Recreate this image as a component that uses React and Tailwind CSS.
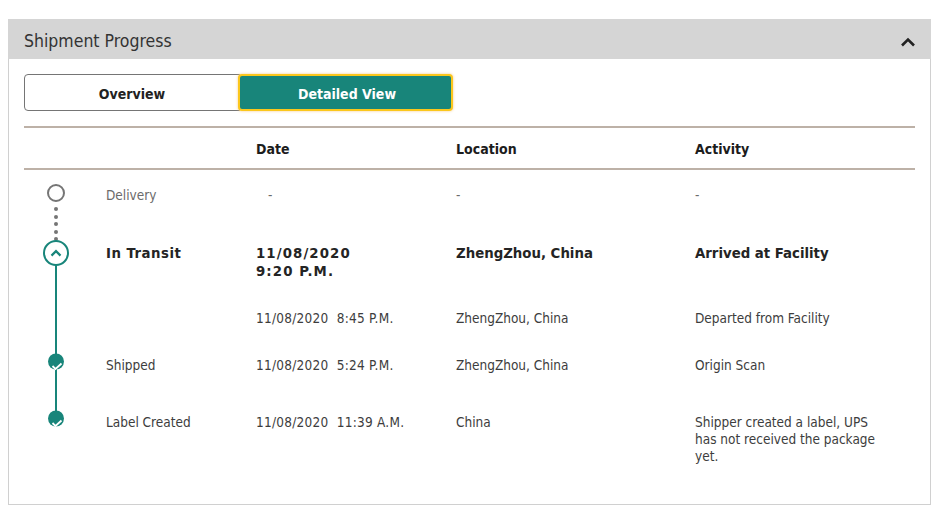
import { useState } from 'react'

const FONT = "font-['DejaVu_Sans_Condensed','DejaVu_Sans',sans-serif]"
const TEAL = '#18857a'
const COLS = 'grid grid-cols-[82px_150px_200px_239px_1fr]'

function Chevron({ className, stroke = 2.6 }) {
  return (
    <svg className={className} viewBox="0 0 16 10" fill="none">
      <path d="M2 8.5 L8 2.5 L14 8.5" stroke="currentColor" strokeWidth={stroke} />
    </svg>
  )
}

// filled node with the little white tick on its lower edge
function DoneNode() {
  return (
    <svg className="absolute left-[23px] top-[-4px] w-[18px] h-[18px]" viewBox="0 0 18 18">
      <circle cx="9" cy="8.5" r="8" fill={TEAL} />
      <path d="M5.5 13 L8.5 16 L14.5 10.5" fill="none" stroke="#fff" strokeWidth="1.8" />
    </svg>
  )
}

function Row({ marker, status, date, location, activity, bold, muted, className }) {
  let text = 'text-[13.5px] leading-[17px] text-[#3d3d3d]'
  if (bold) text = 'text-[14.8px] leading-[18px] font-bold text-[#242424]'
  if (muted) text = 'text-[13.5px] leading-[17px] text-[#6b6b6b]'
  return (
    <div className={`${COLS} ${className}`}>
      <div className="relative">{marker}</div>
      <div className={`${text} ${bold ? 'tracking-[0.5px]' : ''}`}>{status}</div>
      <div className={`${text} ${muted ? 'pl-3' : bold ? 'tracking-[1.1px]' : 'tracking-[0.25px]'}`}>{date}</div>
      <div className={text}>{location}</div>
      <div className={`${text} max-w-[190px]`}>{activity}</div>
    </div>
  )
}

export default function App() {
  const [open] = useState(true)

  return (
    <div className={`${FONT} bg-white w-[931px] h-[505px] pt-[19px] pl-2`}>
      <div className="w-[923px] h-[486px] border-x border-b border-[#d0d0d0]">
        <div className="h-10 -mx-px bg-[#d5d5d5] flex items-center justify-between pl-4 pr-[15px]">
          <h2 className="text-[17.5px] text-[#333] pt-[5px]">Shipment Progress</h2>
          <Chevron className="w-4 h-[10px] mt-[6px] text-[#222]" />
        </div>

        {open && (
          <div className="px-[15px]">
            <div className="flex pt-[15px]">
              <button className="w-[216px] h-[37px] pt-[3px] border border-[#757575] rounded-l-[4px] text-[14px] font-bold text-[#222]">
                Overview
              </button>
              <button className="relative -ml-[2px] w-[215px] h-[37px] pt-[3px] pl-[3px] bg-[#18857a] border-2 border-[#fbc71c] rounded-[4px] text-[14px] font-bold text-white shadow-[0_0_3px_#f5c98a]">
                Detailed View
              </button>
            </div>

            <div className={`${COLS} mt-[15px] w-[891px] pt-[2px] border-y-2 border-[#bdb1a7] h-[44px] items-center text-[14px] font-bold text-[#1c1c1c]`}>
              <div className="col-start-3">Date</div>
              <div>Location</div>
              <div>Activity</div>
            </div>

            <Row
              muted
              className="pt-[17px] pb-[40px]"
              status="Delivery"
              date="-"
              location="-"
              activity="-"
              marker={
                <>
                  <div className="absolute left-[23px] top-[-3px] w-[18px] h-[18px] rounded-full border-2 border-[#757575]" />
                  <div className="absolute left-[30px] top-[20px] flex flex-col gap-[3.5px]">
                    <span className="w-1 h-1 rounded-full bg-[#757575]" />
                    <span className="w-1 h-1 rounded-full bg-[#757575]" />
                    <span className="w-1 h-1 rounded-full bg-[#757575]" />
                    <span className="w-1 h-1 rounded-full bg-[#757575]" />
                    <span className="w-1 h-1 rounded-full bg-[#757575]" />
                  </div>
                </>
              }
            />
            <Row
              bold
              className="pb-[30px]"
              status="In Transit"
              date={<>11/08/2020<br />9:20 P.M.</>}
              location="ZhengZhou, China"
              activity="Arrived at Facility"
              marker={
                <>
                  <div className="absolute left-[19px] top-[-4px] w-[26px] h-[26px] rounded-full border-2 border-[#18857a] bg-white flex items-center justify-center">
                    <Chevron className="w-3 h-2 text-[#18857a]" stroke={3} />
                  </div>
                  <div className="absolute left-[31px] top-[21px] w-[2px] h-[115px] bg-[#18857a]" />
                </>
              }
            />
            <Row
              className="pb-[30px]"
              date={<span className="whitespace-pre">11/08/2020  8:45 P.M.</span>}
              location="ZhengZhou, China"
              activity="Departed from Facility"
            />
            <Row
              className="pb-[40px]"
              status="Shipped"
              date={<span className="whitespace-pre">11/08/2020  5:24 P.M.</span>}
              location="ZhengZhou, China"
              activity="Origin Scan"
              marker={
                <>
                  <div className="absolute left-[31px] top-[7px] w-[2px] h-[50px] bg-[#18857a]" />
                  <DoneNode />
                </>
              }
            />
            <Row
              status="Label Created"
              date={<span className="whitespace-pre">11/08/2020  11:39 A.M.</span>}
              location="China"
              activity="Shipper created a label, UPS has not received the package yet."
              marker={<DoneNode />}
            />
          </div>
        )}
      </div>
    </div>
  )
}
